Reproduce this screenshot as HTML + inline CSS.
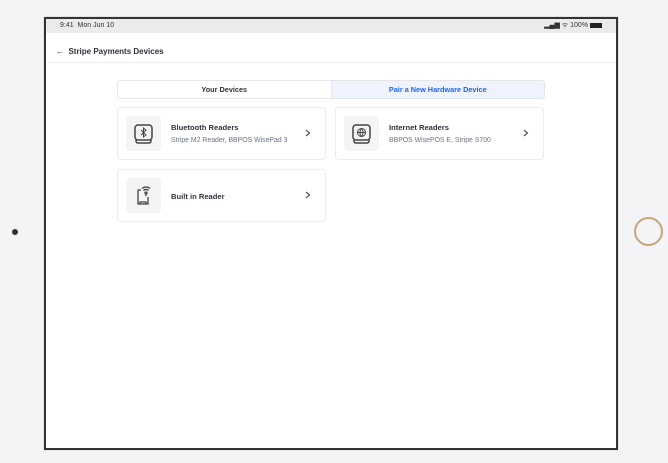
<!DOCTYPE html>
<html><head><meta charset="utf-8"><style>
*{box-sizing:border-box;margin:0;padding:0}
body{width:668px;height:463px;background:#f3f4f6;font-family:"Liberation Sans",sans-serif;position:relative;overflow:hidden;color:#30313d}
.frame{position:absolute;left:44px;top:17px;width:574px;height:433px;border:2px solid #333;background:#fff;box-shadow:0 0 1px #999}
.status{position:absolute;left:0;top:0;right:0;height:14px;background:#ebebed;font-size:7px;color:#333;line-height:14px;padding:0 14px}
.status .r{position:absolute;right:14px;top:0}
.hdr{position:absolute;left:0;top:14px;right:0;height:30px;border-bottom:1px solid #f0f0f2;font-size:8px;font-weight:bold;line-height:37px;padding-left:10px}
.tabs{position:absolute;left:71px;top:61px;width:428px;height:19px;border:1px solid #e3e5e8;border-radius:3px;display:flex;font-size:7.3px;font-weight:bold;overflow:hidden}
.tabs div{flex:1;text-align:center;line-height:17px}
.tabs .a{background:#eef3fe;color:#2563eb;border-left:1px solid #e3e5e8}
.card{position:absolute;width:209px;height:53px;border:1px solid #ececef;border-radius:4px;background:#fff}
.ib{position:absolute;left:8px;top:8px;width:35px;height:35px;background:#f3f4f6;border-radius:4px}
.ib svg{position:absolute;left:7px;top:7px}
.t{position:absolute;left:53px;top:15px;font-size:7.6px;font-weight:bold;color:#30313d}
.s{position:absolute;left:53px;top:29px;font-size:6.9px;color:#6a7383}
.ch{position:absolute;right:12px;top:19px;width:10px;height:12px}
</style></head><body>
<div style="position:absolute;left:12px;top:229px;width:6px;height:6px;border-radius:50%;background:#333"></div>
<div style="position:absolute;left:634px;top:217px;width:29px;height:29px;border-radius:50%;border:2px solid #c9a47a"></div>
<div class="frame">
<div class="status">9:41&nbsp; Mon Jun 10<span class="r">▂▄▆ ᯤ 100% <span style="display:inline-block;width:12px;height:5px;background:#222;vertical-align:middle"></span></span></div>
<div class="hdr">←&nbsp; Stripe Payments Devices</div>
<div class="tabs"><div>Your Devices</div><div class="a">Pair a New Hardware Device</div></div>
<div class="card" style="left:71px;top:88px"><div class="ib"><svg width="21" height="21" viewBox="0 0 21 21" fill="none" stroke="#444" stroke-width="1.5"><rect x="2" y="2" width="17" height="15" rx="3"/><path d="M3 17v1a2 2 0 0 0 2 2h11a2 2 0 0 0 2-2v-1"/><path d="M8 7l5 5-2.5 2V5l2.5 2-5 5" stroke-width="1"/></svg></div><div class="t">Bluetooth Readers</div><div class="s">Stripe M2 Reader, BBPOS WisePad 3</div><svg class="ch" viewBox="0 0 10 12" fill="none" stroke="#555" stroke-width="1.2"><path d="M3 3l3.5 3L3 9"/></svg></div>
<div class="card" style="left:289px;top:88px"><div class="ib"><svg width="21" height="21" viewBox="0 0 21 21" fill="none" stroke="#444" stroke-width="1.5"><rect x="2" y="2" width="17" height="15" rx="3"/><path d="M3 17v1a2 2 0 0 0 2 2h11a2 2 0 0 0 2-2v-1"/><g stroke-width="1"><circle cx="10.5" cy="9.5" r="4"/><path d="M6.5 9.5h8M10.5 5.5c-2 2.5-2 5.5 0 8M10.5 5.5c2 2.5 2 5.5 0 8"/></g></svg></div><div class="t">Internet Readers</div><div class="s">BBPOS WisePOS E, Stripe S700</div><svg class="ch" viewBox="0 0 10 12" fill="none" stroke="#555" stroke-width="1.2"><path d="M3 3l3.5 3L3 9"/></svg></div>
<div class="card" style="left:71px;top:150px"><div class="ib"><svg width="21" height="21" viewBox="0 0 21 21" fill="none" stroke="#444" stroke-width="1.3"><path d="M8 5H5v14h10v-7"/><path d="M7 19v-2h6v2"/><circle cx="13" cy="8" r="1"/><path d="M13 9v2M10.5 5.5a3.5 3.5 0 0 1 5 0M9 3.5a6 6 0 0 1 8 0"/></svg></div><div class="t" style="top:22px">Built in Reader</div><svg class="ch" viewBox="0 0 10 12" fill="none" stroke="#555" stroke-width="1.2"><path d="M3 3l3.5 3L3 9"/></svg></div>
</div>
</body></html>
